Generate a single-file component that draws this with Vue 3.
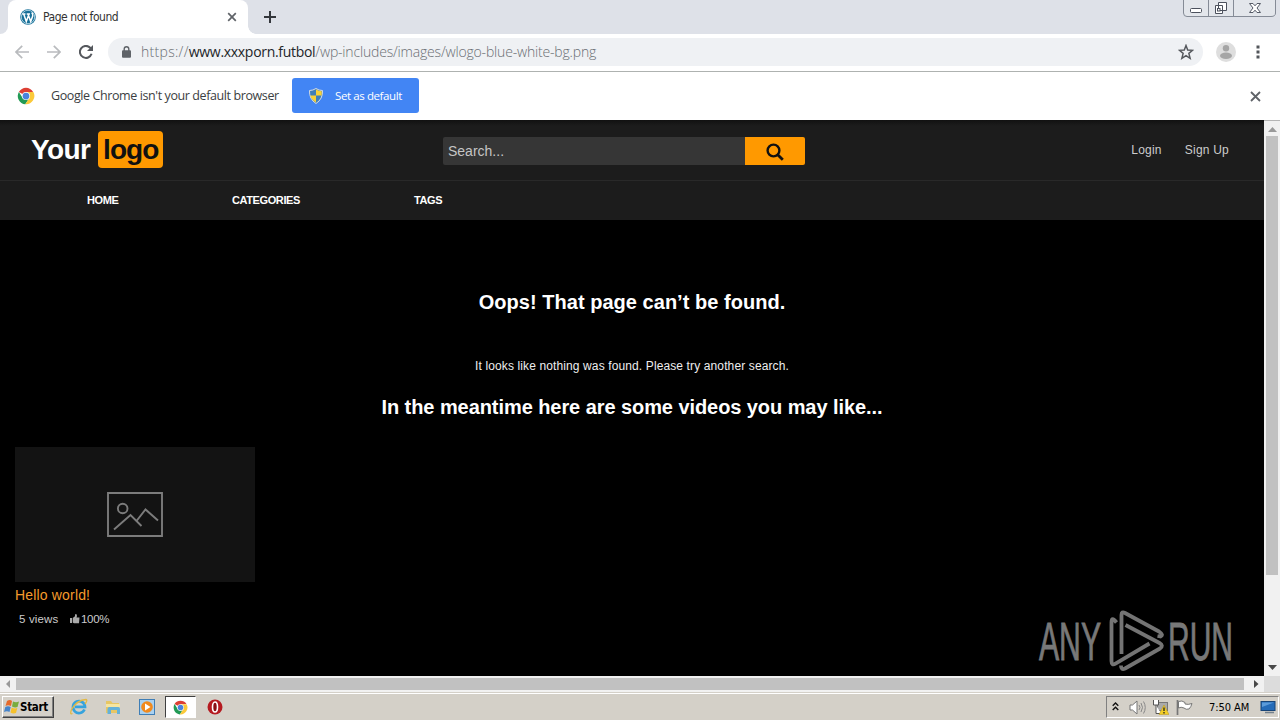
<script setup>
const nav = [
  { label: 'HOME', cls: 'home' },
  { label: 'CATEGORIES', cls: 'categories' },
  { label: 'TAGS', cls: 'tags' },
]
</script>

<template>
  <div class="screen">
    <svg class="defs" width="0" height="0">
      <defs>
        <symbol id="chrome" viewBox="0 0 24 24">
          <path d="M12 12L2.500 6.500A11 11 0 0 1 21.500 6.500L12 6.500z" fill="#dd3f33" />
          <path d="M2.500 6.500A11 11 0 0 0 11 23L16.500 14.500L7.500 14.500z" fill="#229a55" />
          <path d="M21.800 6.800H12V12L16.500 14.500L11 23A11 11 0 0 0 21.800 6.800z" fill="#fbc93a" />
          <circle cx="12" cy="12" r="5.400" fill="#fff" />
          <circle cx="12" cy="12" r="4.500" fill="#4a83dc" />
        </symbol>
      </defs>
    </svg>

    <header class="tabs">
      <div class="edge"></div>
      <div class="tab">
        <svg class="wp" width="16" height="16" viewBox="0 0 16 16">
          <circle cx="8" cy="8" r="7.8" fill="#176f98" />
          <circle cx="8" cy="8" r="6.7" fill="none" stroke="#c9e4ee" stroke-width=".8" />
          <path d="M2.2 5H5.5M3.7 5L6.3 12.6L8.3 7M6.7 5H10M8 5L10.7 12.6L12.7 7Q13 5 11.7 3.6" fill="none" stroke="#fff" stroke-width="1.5" />
        </svg>
        <span class="tab-title">Page not found</span>
        <svg class="tab-x" width="10" height="10" viewBox="0 0 10 10"><path d="M1.2 1.2L8.8 8.8M8.8 1.2L1.2 8.8" stroke="#5f6368" stroke-width="1.7" /></svg>
      </div>
      <svg class="plus" width="12" height="12" viewBox="0 0 12 12"><path d="M6 0V12M0 6H12" stroke="#34373c" stroke-width="2" /></svg>
      <svg class="winctl" width="94" height="18" viewBox="0 0 94 18">
        <path d="M.5 0V13Q.5 16.5 4 16.5H88Q92.5 16.5 92.5 13V0M25.500 0V16M50.500 0V16" fill="#e3e6eb" stroke="#858b96" />
        <rect x="7.500" y="8.500" width="11" height="4" rx="1" fill="#fff" stroke="#4c515d" />
        <path d="M35.500 2.500H43.500V10.500H35.500zM32.500 5.500H39.500V13.500H32.500z" fill="#fff" stroke="#4c515d" />
        <rect x="34.500" y="8.500" width="2.500" height="2.500" fill="#fff" stroke="#4c515d" />
        <path d="M66.500 3.500H70L72 5.800L74 3.500H77.500L74 8L77.500 12.500H74L72 10.200L70 12.500H66.500L70 8z" fill="#fff" stroke="#555a66" />
      </svg>
    </header>

    <div class="toolbar">
      <svg class="arrow" width="14" height="14" viewBox="0 0 14 14"><path d="M14 7H1M7.200 .8L1 7L7.200 13.200" fill="none" stroke="#b9bbbe" stroke-width="1.700" /></svg>
      <svg class="arrow fwd" width="14" height="14" viewBox="0 0 14 14"><path d="M0 7H13M6.800 .8L13 7L6.800 13.200" fill="none" stroke="#b9bbbe" stroke-width="1.700" /></svg>
      <svg class="reload" width="14" height="14" viewBox="0 0 14 14"><path d="M12.600 8.800A6 6 0 1 1 11.200 2.700L13 4.500" fill="none" stroke="#55585d" stroke-width="2" /><path d="M14 0V6H8z" fill="#55585d" /></svg>
      <div class="omnibox">
        <svg class="lock" width="9" height="12" viewBox="0 0 9 12"><path d="M2.200 5V3A2.300 2.300 0 0 1 6.800 3V5" fill="none" stroke="#5f6368" stroke-width="1.400" /><rect x="0" y="4.300" width="9" height="7.500" rx="1" fill="#5f6368" /></svg>
        <div class="url"><span class="scheme">https://</span><b>www.xxxporn.futbol</b><span class="path">/wp-includes/images/wlogo-blue-white-bg.png</span></div>
        <svg class="star" width="16" height="16" viewBox="0 0 14 14"><path d="M7 1.300L8.500 5.200L12.800 5.500L9.500 8.200L10.600 12.500L7 10.100L3.400 12.500L4.500 8.200L1.200 5.500L5.500 5.200z" fill="none" stroke="#55585d" stroke-width="1.300" /></svg>
      </div>
      <svg class="avatar" width="20" height="20" viewBox="0 0 20 20"><circle cx="10" cy="10" r="10" fill="#dedede" /><circle cx="10" cy="6.200" r="3.200" fill="#a5a5a5" /><ellipse cx="10" cy="13.700" rx="6" ry="3.200" fill="#a5a5a5" /></svg>
      <svg class="dots" width="4" height="14" viewBox="0 0 4 14"><path d="M.5 .5H3.500V3.500H.5zM.5 5.500H3.500V8.500H.5zM.5 10.500H3.500V13.500H.5z" fill="#53565b" /></svg>
    </div>

    <div class="infobar">
      <svg class="ch" width="18" height="18"><use href="#chrome" /></svg>
      <span class="info-text">Google Chrome isn't your default browser</span>
      <button class="default-btn">
        <svg width="14" height="16" viewBox="0 0 14 16"><path d="M7 .5Q10 2.500 13.500 2.500Q14 11 7 15.500Q0 11 .5 2.500Q4 2.500 7 .5z" fill="#3f7fb8" stroke="#d6dce2" /><path d="M7 1.500Q10 3.200 12.700 3.300V7.500H7zM7 7.500V14.500Q2.200 11.500 1.300 7.500z" fill="#f7d238" /></svg>
        <span>Set as default</span>
      </button>
      <svg class="info-x" width="11" height="11" viewBox="0 0 11 11"><path d="M1 1L10 10M10 1L1 10" stroke="#5f6368" stroke-width="1.800" /></svg>
    </div>

    <div class="viewport">
      <main class="page">
        <div class="head">
          <div class="logo"><span class="your">Your</span><span class="box"><span>logo</span></span></div>
          <div class="search">
            <div class="field">Search...</div>
            <div class="go"><svg width="18" height="18" viewBox="0 0 18 18"><circle cx="7.500" cy="7.500" r="5.900" fill="none" stroke="#111" stroke-width="2.400" /><path d="M11.700 11.700L16.800 16.800" stroke="#111" stroke-width="2.800" /></svg></div>
          </div>
          <div class="account"><span class="login">Login</span><span>Sign Up</span></div>
        </div>
        <nav class="nav"><span v-for="n in nav" :key="n.label" :class="n.cls">{{ n.label }}</span></nav>
        <h1><span>Oops! That page can’t be found.</span></h1>
        <p class="nothing"><span>It looks like nothing was found. Please try another search.</span></p>
        <h2><span>In the meantime here are some videos you may like...</span></h2>
        <article class="card">
          <div class="thumb">
            <svg width="56" height="45" viewBox="0 0 56 45"><path d="M1 1H55V44H1zM7 37.500L23.500 23L34.500 34M29.500 29L38.500 17.500L51 28.500" fill="none" stroke="#7c7c7c" stroke-width="1.900" /><circle cx="15.700" cy="16.500" r="4.800" fill="none" stroke="#7c7c7c" stroke-width="1.900" /></svg>
          </div>
          <div class="title">Hello world!</div>
          <div class="meta"><span class="views">5 views</span><svg width="10" height="10" viewBox="0 0 10 10"><path d="M0 4H2V9H0zM2.700 4L5 2.200V.3H6.600L7 2L6.500 3.500H9.500L9 9.200H4L2.700 8.500z" fill="#aaa" /></svg><span class="rate">100%</span></div>
        </article>
        <svg class="watermark" width="200" height="62" viewBox="0 0 200 62">
          <g fill="#787878" stroke="#787878" stroke-width=".9" font-family="Liberation Sans Narrow, Liberation Sans, sans-serif" font-size="53">
            <text x="1" y="49.500" textLength="62" lengthAdjust="spacingAndGlyphs">ANY</text>
            <text x="130" y="49.500" textLength="65" lengthAdjust="spacingAndGlyphs">RUN</text>
          </g>
          <g fill="none" stroke="#747474" stroke-width="3.800" stroke-linejoin="round" stroke-linecap="butt">
            <path d="M78.500 12.500Q73.500 6 73.500 12.500V51Q73.500 56 77.500 53.700L111.500 33.500" />
            <path d="M83.500 44V5Q83.500 1 87 3L121 21.500Q126 25 122.500 26.500L119.500 26" />
            <path d="M87.500 15L121.500 33Q126 35.500 122 38.500L87 58.500Q83 60.500 83 55.500" />
          </g>
        </svg>
      </main>
      <div class="vbar">
        <svg width="9" height="5" viewBox="0 0 9 5"><path d="M0 5L4.500 0L9 5z" fill="#999" /></svg>
        <div class="vthumb"></div>
        <svg class="down" width="9" height="5" viewBox="0 0 9 5"><path d="M0 0H9L4.500 5z" fill="#484848" /></svg>
      </div>
    </div>

    <div class="hbar">
      <svg width="16" height="16" viewBox="0 0 16 16"><path d="M10 4V12L6 8z" fill="#999" /></svg>
      <div class="hthumb"></div>
      <svg class="right" width="16" height="16" viewBox="0 0 16 16"><path d="M6 4V12L10.500 8z" fill="#484848" /></svg>
      <div class="corner"></div>
    </div>

    <footer class="taskbar">
      <div class="start">
        <svg width="16" height="16" viewBox="0 0 16 16"><path d="M3 2Q6 0 8 2L7 7Q4 5.500 1.500 7z" fill="#e66a2b" /><path d="M9 2.500Q12 4 15 2.500L13.500 8Q11 9 8 7.500z" fill="#79ac3d" /><path d="M1.300 8Q4 6.500 6.700 8L5.500 13Q3 11.500 0 13z" fill="#4684ca" /><path d="M7.700 8.500Q10.500 10 13.300 9L12 14Q9 15 6.500 13.500z" fill="#f6c12b" /></svg>
        <span>Start</span>
      </div>
      <svg class="ie" width="18" height="18" viewBox="0 0 18 18"><path d="M14.500 11.500A6 6 0 1 1 15 8.800H5" fill="none" stroke="#36a3dd" stroke-width="2.700" /><path d="M2.500 15.500Q-.5 17 1.500 11.500Q7 2 16 1.500Q18 2 15 6" fill="none" stroke="#e3b943" stroke-width="1.300" /></svg>
      <svg class="folder" width="16" height="16" viewBox="0 0 16 16"><path d="M1 2H6L7.500 4H14V14H1z" fill="#e7c664" /><path d="M1 5H15V8H1z" fill="#f6e5a0" /><path d="M2.500 15V10Q2.500 8 4.500 8H13Q15 8 15 10V15H12V11H6V15z" fill="#64b1d9" /></svg>
      <svg class="media" width="16" height="16" viewBox="0 0 16 16"><rect x=".5" y=".5" width="15" height="15" fill="#a9d1f1" stroke="#3f7eb6" /><circle cx="8" cy="8" r="5.800" fill="#f18a1e" /><path d="M6 4.500L11.500 8L6 11.500z" fill="#fff" /></svg>
      <div class="active"><svg width="15" height="15"><use href="#chrome" /></svg></div>
      <svg class="opera" width="16" height="16" viewBox="0 0 16 16"><circle cx="8" cy="8" r="7.500" fill="#b51a20" /><ellipse cx="8" cy="8" rx="2.500" ry="5" fill="#8a1015" stroke="#fff" stroke-width="1.600" /></svg>
      <div class="tray">
        <svg class="chev" width="7" height="9" viewBox="0 0 7 9"><path d="M.7 3.700L3.500 1L6.300 3.700M.7 8L3.500 5.200L6.300 8" fill="none" stroke="#111" stroke-width="1.400" /></svg>
        <svg class="speaker" width="17" height="15" viewBox="0 0 17 15"><path d="M1 5H3.500L8 1V14L3.500 10H1z" fill="#fff" stroke="#777" /><path d="M10 5Q12 7.500 10 10M12 3Q15 7.500 12 12M14.500 1.500Q18 7.500 14.500 13.500" fill="none" stroke="#888" /></svg>
        <svg class="net" width="16" height="16" viewBox="0 0 16 16"><rect x="4.500" y="3.500" width="10" height="8" fill="#aaa" stroke="#777" /><path d="M.5 1V6H5.500V1M3 6V14.500H8" fill="#fff" stroke="#555" /><path d="M11 6L16 15.500H6z" fill="#f3ce25" stroke="#b9941a" stroke-width=".5" /><path d="M11 8.500V12M11 13V14.500" stroke="#222" stroke-width="1.300" /></svg>
        <svg class="flag" width="17" height="15" viewBox="0 0 17 15"><path d="M2.500 1.500Q6 0 9 2.500V4Q12 5 16 3.500Q15 7 13 9Q10 10 8 8Q5 6.500 2.500 8z" fill="#fff" stroke="#777" /><path d="M1.500 0V15" stroke="#777" stroke-width="1.700" /></svg>
        <span class="clock">7:50 AM</span>
        <svg class="desktop" width="16" height="14" viewBox="0 0 16 14"><rect x="1" y="1.500" width="14" height="9" fill="#246bb8" stroke="#174477" /><path d="M2 2.500H14L2 7z" fill="#5b9bda" /><path d="M5 12.500H14" stroke="#74818d" stroke-width="1.500" /></svg>
      </div>
    </footer>
  </div>
</template>

<style>
html, body { margin: 0; overflow: hidden; }
</style>

<style scoped>
* { box-sizing: border-box; }
svg { flex: none; display: block; }
.defs { position: absolute; }
.screen { width: 1280px; height: 720px; overflow: hidden; display: flex; flex-direction: column; background: #fff; font-family: "Open Sans", "Noto Sans", sans-serif; white-space: nowrap; }
.tabs { height: 34px; flex: none; display: flex; background: #dee1e8; }
.edge { width: 8px; background: #fff; height: 34px; position: relative; }
.edge::after { content: ""; position: absolute; inset: 0; background: #dee1e8; border-bottom-right-radius: 8px; }
.tab { width: 240px; height: 34px; background: #fff; border-radius: 8px 8px 0 0; display: flex; align-items: center; position: relative; }
.tab::after { content: ""; position: absolute; left: 240px; bottom: 0; width: 8px; height: 8px; background: radial-gradient(circle at 100% 0, #dee1e8 7.500px, #fff 8px); }
.wp { margin-left: 12px; }
.tab-title { width: 176px; margin-left: 7px; font: 12px "DejaVu Sans Condensed", "DejaVu Sans", sans-serif; font-stretch: condensed; letter-spacing: -.45px; color: #333; }
.tab-x { margin-left: 8px; }
.plus { margin: 11px 0 0 16px; }
.winctl { margin: 0 3px 0 auto; }
.toolbar { height: 38px; flex: none; border-bottom: 1px solid #aeb2b0; display: flex; align-items: center; padding: 0 0 2px 15px; }
.fwd { margin-left: 18px; }
.reload { margin-left: 18px; }
.omnibox { width: 1095px; height: 28px; border-radius: 14px; background: #eff1f4; display: flex; align-items: center; margin: 0 0 0 15px; padding-left: 14px; }
.url { margin-left: 10px; width: 454px; font-size: 14px; letter-spacing: -.18px; color: #6a6e73; font-weight: 300; line-height: 28px; }
.scheme { letter-spacing: .3px; }
.url b { font-weight: 400; color: #222529; letter-spacing: -.3px; }
.star { margin-left: 583px; }
.avatar { margin-left: 13px; }
.dots { margin-left: 20px; }
.infobar { height: 48px; flex: none; display: flex; align-items: center; }
.ch { margin-left: 17px; }
.info-text { margin: -2px 0 0 16px; width: 229px; font-size: 12.500px; letter-spacing: -.4px; color: #3b3e42; }
.default-btn { margin: -1px 0 0 12px; width: 127px; height: 35px; border: 0; border-radius: 3px; background: #4285f4; color: #fff; padding: 0 0 0 17px; display: flex; align-items: center; gap: 12px; font: 11.500px "Open Sans", sans-serif; letter-spacing: -.4px; }
.info-x { margin: 0 19px 0 auto; }
.viewport { height: 556px; flex: none; display: flex; font-family: "Liberation Sans", Arial, sans-serif; }
.page { width: 1264px; background: #000; position: relative; color: #fff; }
.head { height: 61px; border-bottom: 1px solid #292929; background: linear-gradient(#111, #1c1c1c 6px); display: flex; align-items: flex-start; }
.logo { display: flex; margin-left: 31px; width: 132px; align-items: center; font-weight: 700; font-size: 28px; height: 37px; margin-top: 11px; }
.your { width: 67px; letter-spacing: -.6px; }
.box { height: 37px; width: 65px; border-radius: 4px; background: #ff9900; color: #111; padding-left: 5px; line-height: 37px; letter-spacing: -.9px; }
.search { margin: 17px 0 0 280px; display: flex; height: 28px; width: 362px; }
.field { width: 302px; background: #363636; border-radius: 2px 0 0 2px; padding-left: 5px; font-size: 14px; line-height: 28px; color: #c5c5c5; }
.go { width: 60px; background: #ff9900; border-radius: 0 2px 2px 0; display: flex; align-items: center; justify-content: center; padding-top: 2px; }
.account { margin: 22px 35px 0 auto; font-size: 12px; letter-spacing: .22px; line-height: 16px; color: #ccc; display: flex; gap: 23px; }
.nav { height: 39px; background: #1c1c1c; display: flex; font-size: 11px; font-weight: 700; line-height: 39px; letter-spacing: -.4px; }
.home { margin-left: 87px; width: 145px; }
.categories { width: 182px; }
h1, h2 { text-align: center; font-size: 20px; margin: 0; line-height: 24px; }
h1 { padding-top: 70px; letter-spacing: .03px; }
.nothing { text-align: center; font-size: 12px; line-height: 16px; letter-spacing: .12px; margin: 44px 0 0; color: #eee; }
h2 { margin-top: 21px; letter-spacing: -.07px; }
.card { width: 240px; margin: 28px 0 0 15px; }
.thumb { height: 135px; background: #131313; display: flex; align-items: center; justify-content: center; }
.title { font-size: 14px; line-height: 18px; letter-spacing: .17px; margin-top: 4px; color: #f49b2c; }
.meta { font-size: 11.500px; line-height: 16px; display: flex; align-items: center; color: #ccc; margin: 7px 0 0 4px; }
.views { width: 51px; letter-spacing: .15px; }
.rate { margin-left: 1px; letter-spacing: -.3px; }
.watermark { position: absolute; left: 1038px; top: 490px; }
.vbar { width: 16px; background: #f1f1f1; display: flex; flex-direction: column; align-items: center; padding-top: 6px; border-top: 1px solid #b5b5b5; }
.vthumb { width: 12px; height: 439px; margin-top: 4px; background: #c1c1c1; }
.down { margin: auto 0 6px; }
.hbar { height: 16px; flex: none; display: flex; align-items: center; background: #f1f1f1; }
.hthumb { width: 1228px; height: 12px; background: #c1c1c1; }
.right { margin-left: 4px; }
.corner { width: 16px; height: 16px; background: #dcdcdc; }
.taskbar { height: 28px; flex: none; background: #d4d0c8; border-top: 1px solid #d4d0c8; box-shadow: inset 0 1px #fff; display: flex; align-items: center; padding-top: 1px; }
.start { width: 52px; height: 22px; margin-left: 2px; display: flex; align-items: center; padding-left: 1px; border: 1px solid; border-color: #fff #404040 #404040 #fff; box-shadow: inset -1px -1px #808080; }
.start span { font: bold 11.500px "DejaVu Sans Condensed", "DejaVu Sans", sans-serif; font-stretch: condensed; letter-spacing: -.3px; color: #000; }
.ie { margin-left: 16px; }
.folder { margin-left: 17px; }
.media { margin-left: 18px; }
.active { margin-left: 10px; width: 31px; height: 22px; background: #fff; border: 1px solid; border-color: #404040 #fff #fff #404040; display: flex; align-items: center; justify-content: center; }
.opera { margin-left: 11px; }
.tray { width: 173px; height: 22px; border: 1px solid; border-color: #808080 #fff #fff #808080; margin: 0 1px 0 auto; display: flex; align-items: center; }
.chev { margin-left: 5px; margin-bottom: 2px; }
.speaker { margin-left: 10px; }
.net { margin-left: 7px; }
.flag { margin-left: 7px; }
.clock { width: 42px; margin-left: 16px; font: 11px "DejaVu Sans Condensed", "DejaVu Sans", sans-serif; font-stretch: condensed; letter-spacing: -.05px; color: #000; }
.desktop { margin-left: 9px; }
</style>
